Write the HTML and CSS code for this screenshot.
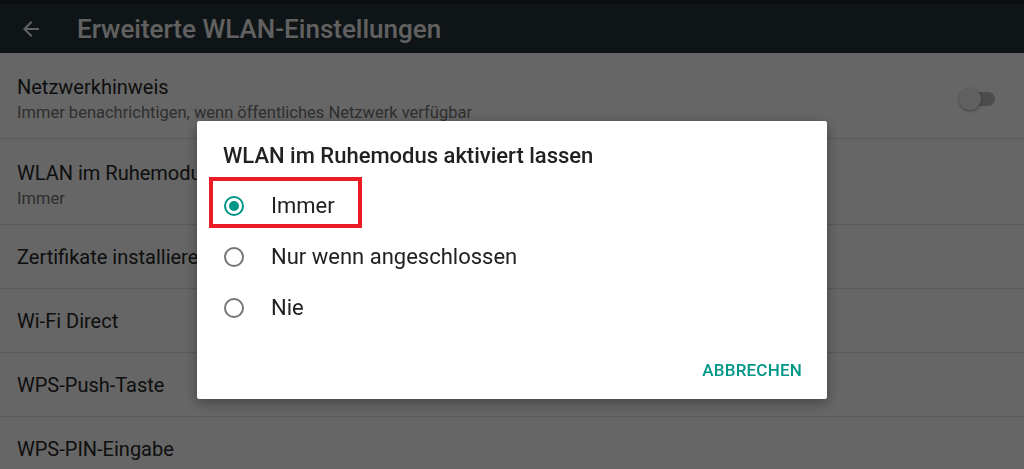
FILE: index.html
```html
<!DOCTYPE html>
<html lang="de">
<head>
    <meta charset="UTF-8">
    <meta name="viewport" content="width=device-width, initial-scale=1.0">
    <title>Erweiterte WLAN-Einstellungen</title>
    <link rel="stylesheet" href="styles.css">
</head>
<body>

    <div class="status-strip"></div>
    <header class="app-bar">
        <svg class="back-icon" viewBox="0 0 24 24" width="24" height="24">
            <path d="M20 11H7.83l5.59-5.59L12 4l-8 8 8 8 1.41-1.41L7.83 13H20v-2z" fill="currentColor"/>
        </svg>
        <h1>Erweiterte WLAN-Einstellungen</h1>
    </header>

    <main class="settings-list">
        <div class="setting two-line">
            <div class="setting-text">
                <div class="setting-title">Netzwerkhinweis</div>
                <div class="setting-summary">Immer benachrichtigen, wenn öffentliches Netzwerk verfügbar</div>
            </div>
            <div class="switch">
                <span class="switch-track"></span>
                <span class="switch-thumb"></span>
            </div>
        </div>
        <div class="setting two-line">
            <div class="setting-text">
                <div class="setting-title">WLAN im Ruhemodus aktiviert lassen</div>
                <div class="setting-summary">Immer</div>
            </div>
        </div>
        <div class="setting">
            <div class="setting-title">Zertifikate installieren</div>
        </div>
        <div class="setting">
            <div class="setting-title">Wi-Fi Direct</div>
        </div>
        <div class="setting">
            <div class="setting-title">WPS-Push-Taste</div>
        </div>
        <div class="setting">
            <div class="setting-title">WPS-PIN-Eingabe</div>
        </div>
    </main>

    <div class="scrim">
        <div class="dialog">
            <h2>WLAN im Ruhemodus aktiviert lassen</h2>
            <div class="choices">
                <label class="choice">
                    <span class="radio checked"></span>
                    <span>Immer</span>
                    <span class="highlight"></span>
                </label>
                <label class="choice">
                    <span class="radio"></span>
                    <span>Nur wenn angeschlossen</span>
                </label>
                <label class="choice">
                    <span class="radio"></span>
                    <span>Nie</span>
                </label>
            </div>
            <div class="dialog-actions">
                <button>ABBRECHEN</button>
            </div>
        </div>
    </div>

</body>
</html>
```

FILE: styles.css
```css
body {
    margin: 0;
    width: 1024px;
    height: 469px;
    overflow: hidden;
    font-family: Roboto, 'Noto Sans', sans-serif;
    background: #ffffff;
    color: #212121;
}

.status-strip {
    height: 4px;
    background: #1c2428;
}

.app-bar {
    display: flex;
    align-items: center;
    height: 49px;
    background: #263238;
    color: #f2f2f2;
}

.back-icon {
    margin-left: 19px;
    margin-right: 34px;
}

.app-bar h1 {
    margin: 0;
    font-size: 26px;
    font-weight: 500;
}

.setting {
    display: flex;
    align-items: center;
    box-sizing: border-box;
    height: 64px;
    padding: 0 17px;
    border-bottom: 1px solid #e2e2e2;
}

.setting.two-line {
    height: 86px;
    padding-top: 6px;
}

.setting-text {
    flex: 1;
}

.setting-title {
    font-size: 20px;
    line-height: 24px;
    color: #262626;
    white-space: nowrap;
}

.setting-summary {
    font-size: 16.5px;
    line-height: 20px;
    margin-top: 4px;
    color: #757575;
}

.switch {
    position: relative;
    width: 38px;
    height: 24px;
    margin-right: 10px;
}

.switch-track {
    position: absolute;
    left: 2px;
    top: 5px;
    width: 34px;
    height: 14px;
    border-radius: 7px;
    background: #bdbdbd;
}

.switch-thumb {
    position: absolute;
    left: 0;
    top: 1px;
    width: 22px;
    height: 22px;
    border-radius: 50%;
    background: #f1f1f1;
    box-shadow: 0 1px 3px rgba(0, 0, 0, 0.4);
}

.scrim {
    position: fixed;
    inset: 0;
    display: flex;
    justify-content: center;
    align-items: flex-start;
    padding-top: 121px;
    background: rgba(0, 0, 0, 0.6);
}

.dialog {
    width: 630px;
    height: 278px;
    box-sizing: border-box;
    background: white;
    border-radius: 2px;
    box-shadow: 0 4px 14px rgba(0, 0, 0, 0.35);
    display: flex;
    flex-direction: column;
}

.dialog h2 {
    margin: 22px 0 0 26px;
    font-size: 22px;
    line-height: 26px;
    font-weight: 500;
    color: #212121;
}

.choices {
    margin-top: 11px;
}

.choice {
    position: relative;
    display: flex;
    align-items: center;
    height: 51px;
    padding-left: 27px;
    font-size: 22px;
    color: #212121;
}

.radio {
    width: 16px;
    height: 16px;
    border: 2px solid #757575;
    border-radius: 50%;
    margin-right: 27px;
    display: flex;
    align-items: center;
    justify-content: center;
}

.radio.checked {
    border-color: #009688;
}

.radio.checked::after {
    content: "";
    width: 10px;
    height: 10px;
    border-radius: 50%;
    background: #009688;
}

.highlight {
    position: absolute;
    left: 12px;
    top: -3px;
    width: 145px;
    height: 43px;
    border: 4px solid #ec1c24;
}

.dialog-actions {
    display: flex;
    justify-content: flex-end;
    margin-top: auto;
    padding: 0 17px 11px 0;
}

.dialog-actions button {
    height: 36px;
    padding: 0 8px;
    border: none;
    background: none;
    font-family: Roboto, sans-serif;
    font-size: 17px;
    font-weight: 500;
    letter-spacing: 0.2px;
    color: #009688;
}
```
